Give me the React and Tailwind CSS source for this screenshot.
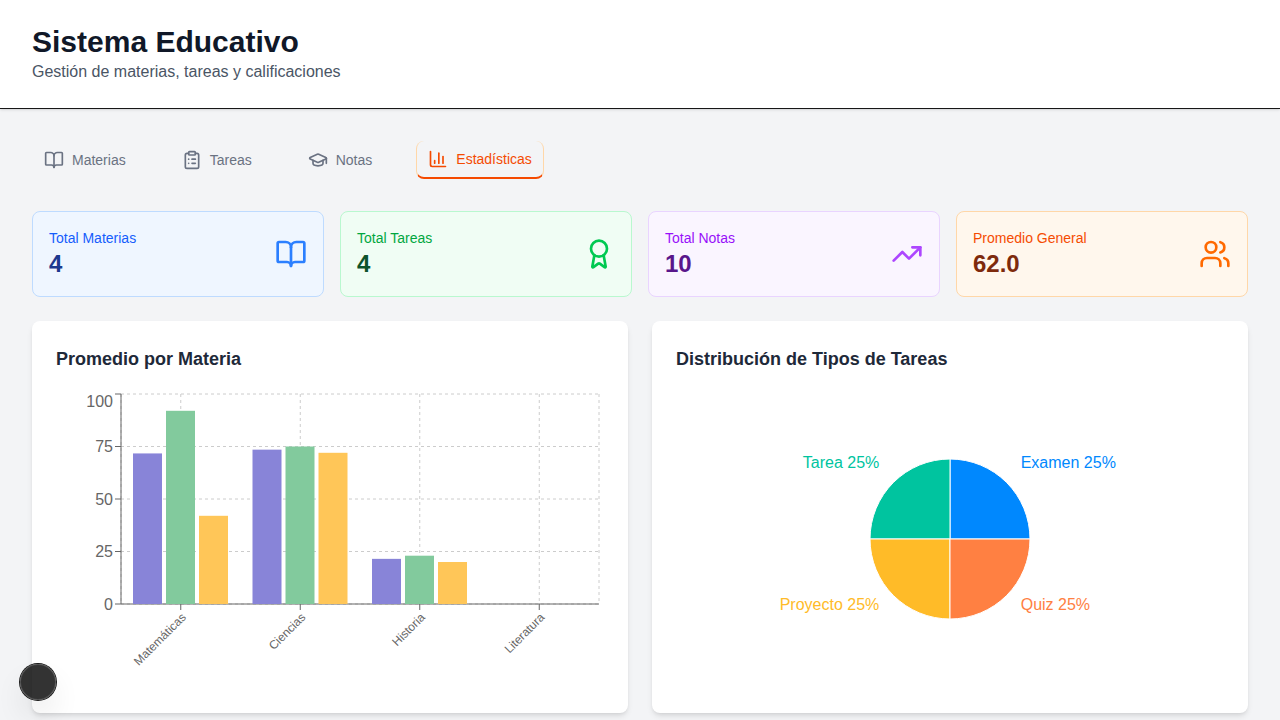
import React, { useState } from 'react';
import {
  Award,
  BookOpen,
  ChartColumn,
  ClipboardList,
  GraduationCap,
  TrendingUp,
  Users,
} from 'lucide-react';

const tabs = [
  { id: 'materias', label: 'Materias', Icon: BookOpen },
  { id: 'tareas', label: 'Tareas', Icon: ClipboardList },
  { id: 'notas', label: 'Notas', Icon: GraduationCap },
  { id: 'estadisticas', label: 'Estadísticas', Icon: ChartColumn },
];

const stats = [
  {
    label: 'Total Materias',
    value: '4',
    Icon: BookOpen,
    card: 'bg-blue-50 border-blue-200',
    labelColor: 'text-blue-600',
    valueColor: 'text-blue-900',
    iconColor: 'text-blue-500',
  },
  {
    label: 'Total Tareas',
    value: '4',
    Icon: Award,
    card: 'bg-green-50 border-green-200',
    labelColor: 'text-green-600',
    valueColor: 'text-green-900',
    iconColor: 'text-green-500',
  },
  {
    label: 'Total Notas',
    value: '10',
    Icon: TrendingUp,
    card: 'bg-purple-50 border-purple-200',
    labelColor: 'text-purple-600',
    valueColor: 'text-purple-900',
    iconColor: 'text-purple-500',
  },
  {
    label: 'Promedio General',
    value: '62.0',
    Icon: Users,
    card: 'bg-orange-50 border-orange-200',
    labelColor: 'text-orange-600',
    valueColor: 'text-orange-900',
    iconColor: 'text-orange-500',
  },
];

const materias = [
  { name: 'Matemáticas', values: [71.7, 92, 42] },
  { name: 'Ciencias', values: [73.5, 75, 72] },
  { name: 'Historia', values: [21.5, 23, 20] },
  { name: 'Literatura', values: [0, 0, 0] },
];

const barColors = ['#8884d8', '#82ca9d', '#ffc658'];

const plot = { left: 65, right: 543, top: 5, bottom: 215 };
const band = (plot.right - plot.left) / materias.length;
const yOf = (v) => plot.bottom - (v / 100) * (plot.bottom - plot.top);
const tickX = (i) => plot.left + band * (i + 0.5);

function BarChart() {
  const yTicks = [0, 25, 50, 75, 100];
  const xLines = [plot.left, ...materias.map((_, i) => tickX(i)), plot.right];
  return (
    <svg viewBox="0 0 548 300" className="block w-full" role="img" aria-label="Promedio por Materia">
      <g stroke="#ccc" strokeDasharray="3 3">
        {yTicks.map((v) => (
          <line key={v} x1={plot.left} x2={plot.right} y1={yOf(v)} y2={yOf(v)} />
        ))}
        {xLines.map((x) => (
          <line key={x} x1={x} x2={x} y1={plot.top} y2={plot.bottom} />
        ))}
      </g>
      <g stroke="#666">
        <line x1={plot.left} x2={plot.right} y1={plot.bottom} y2={plot.bottom} />
        <line x1={plot.left} x2={plot.left} y1={plot.top} y2={plot.bottom} />
        {yTicks.map((v) => (
          <line key={v} x1={plot.left - 6} x2={plot.left} y1={yOf(v)} y2={yOf(v)} />
        ))}
        {materias.map((m, i) => (
          <line key={m.name} x1={tickX(i)} x2={tickX(i)} y1={plot.bottom} y2={plot.bottom + 6} />
        ))}
      </g>
      <g fill="#666" textAnchor="end" fontSize="16">
        {yTicks.map((v) => (
          <text key={v} x={plot.left - 8} y={v === 100 ? 12.5 : yOf(v)} dy="0.355em">
            {v}
          </text>
        ))}
      </g>
      <g fill="#666" textAnchor="end" fontSize="12">
        {materias.map((m, i) => (
          <text
            key={m.name}
            x={tickX(i)}
            y={plot.bottom + 8}
            dy="0.71em"
            transform={`rotate(-45 ${tickX(i)} ${plot.bottom + 8})`}
          >
            {m.name}
          </text>
        ))}
      </g>
      {materias.map((m, i) =>
        m.values.map((v, j) => (
          <rect
            key={`${m.name}-${j}`}
            x={plot.left + 12 + band * i + 33 * j}
            y={yOf(v)}
            width="29"
            height={plot.bottom - yOf(v)}
            fill={barColors[j]}
          />
        )),
      )}
    </svg>
  );
}

function PieChart() {
  return (
    <svg viewBox="0 0 548 300" className="block w-full" role="img" aria-label="Distribución de Tipos de Tareas">
      <g stroke="#fff">
        <path d="M274 150 L354 150 A80 80 0 0 0 274 70 Z" fill="#0088FE" />
        <path d="M274 150 L274 70 A80 80 0 0 0 194 150 Z" fill="#00C49F" />
        <path d="M274 150 L194 150 A80 80 0 0 0 274 230 Z" fill="#FFBB28" />
        <path d="M274 150 L274 230 A80 80 0 0 0 354 150 Z" fill="#FF8042" />
      </g>
      <g fontSize="16">
        <text x="344.7" y="79.3" fill="#0088FE">Examen 25%</text>
        <text x="203.3" y="79.3" fill="#00C49F" textAnchor="end">Tarea 25%</text>
        <text x="203.3" y="220.7" fill="#FFBB28" textAnchor="end">Proyecto 25%</text>
        <text x="344.7" y="220.7" fill="#FF8042">Quiz 25%</text>
      </g>
    </svg>
  );
}

function Panel({ title, children }) {
  return (
    <section className="rounded-lg bg-white p-6 shadow-md">
      <h3 className="mb-4 text-lg font-semibold text-gray-800">{title}</h3>
      {children}
    </section>
  );
}

export default function App() {
  const [active, setActive] = useState('estadisticas');
  return (
    <div className="min-h-screen bg-gray-100 font-['Liberation_Sans',Arial,sans-serif] text-[#171717]">
      <header className="border-b border-[#171717] bg-white px-8 py-6 shadow-sm">
        <h1 className="text-3xl font-bold text-gray-900">Sistema Educativo</h1>
        <p className="text-base text-gray-600">Gestión de materias, tareas y calificaciones</p>
      </header>

      <main className="p-8">
        <nav className="mb-8 flex gap-8">
          {tabs.map(({ id, label, Icon }) => (
            <button
              key={id}
              type="button"
              onClick={() => setActive(id)}
              className={`flex items-center gap-2 rounded-lg border-x px-[11px] py-2 text-sm font-medium ${
                active === id
                  ? 'border-b-2 border-x-orange-200 border-b-orange-600 text-orange-600'
                  : 'border-x-transparent text-gray-500'
              }`}
            >
              <Icon className="size-5" aria-hidden="true" />
              {label}
            </button>
          ))}
        </nav>

        <div className="mb-6 grid grid-cols-1 gap-4 sm:grid-cols-2 lg:grid-cols-4">
          {stats.map(({ label, value, Icon, card, labelColor, valueColor, iconColor }) => (
            <div key={label} className={`flex items-center justify-between rounded-lg border p-4 ${card}`}>
              <div>
                <p className={`text-sm font-medium ${labelColor}`}>{label}</p>
                <p className={`text-2xl font-bold ${valueColor}`}>{value}</p>
              </div>
              <Icon className={`size-8 ${iconColor}`} aria-hidden="true" />
            </div>
          ))}
        </div>

        <div className="grid grid-cols-1 gap-6 lg:grid-cols-2">
          <Panel title="Promedio por Materia">
            <BarChart />
          </Panel>
          <Panel title="Distribución de Tipos de Tareas">
            <PieChart />
          </Panel>
        </div>
      </main>

      <button
        type="button"
        aria-label="Abrir herramientas"
        className="fixed bottom-5 left-5 size-9 rounded-full bg-black/80 shadow-[0_0_0_1px_#171717,inset_0_0_0_1px_rgba(255,255,255,0.14),0_16px_32px_-8px_rgba(0,0,0,0.24)]"
      />
    </div>
  );
}
